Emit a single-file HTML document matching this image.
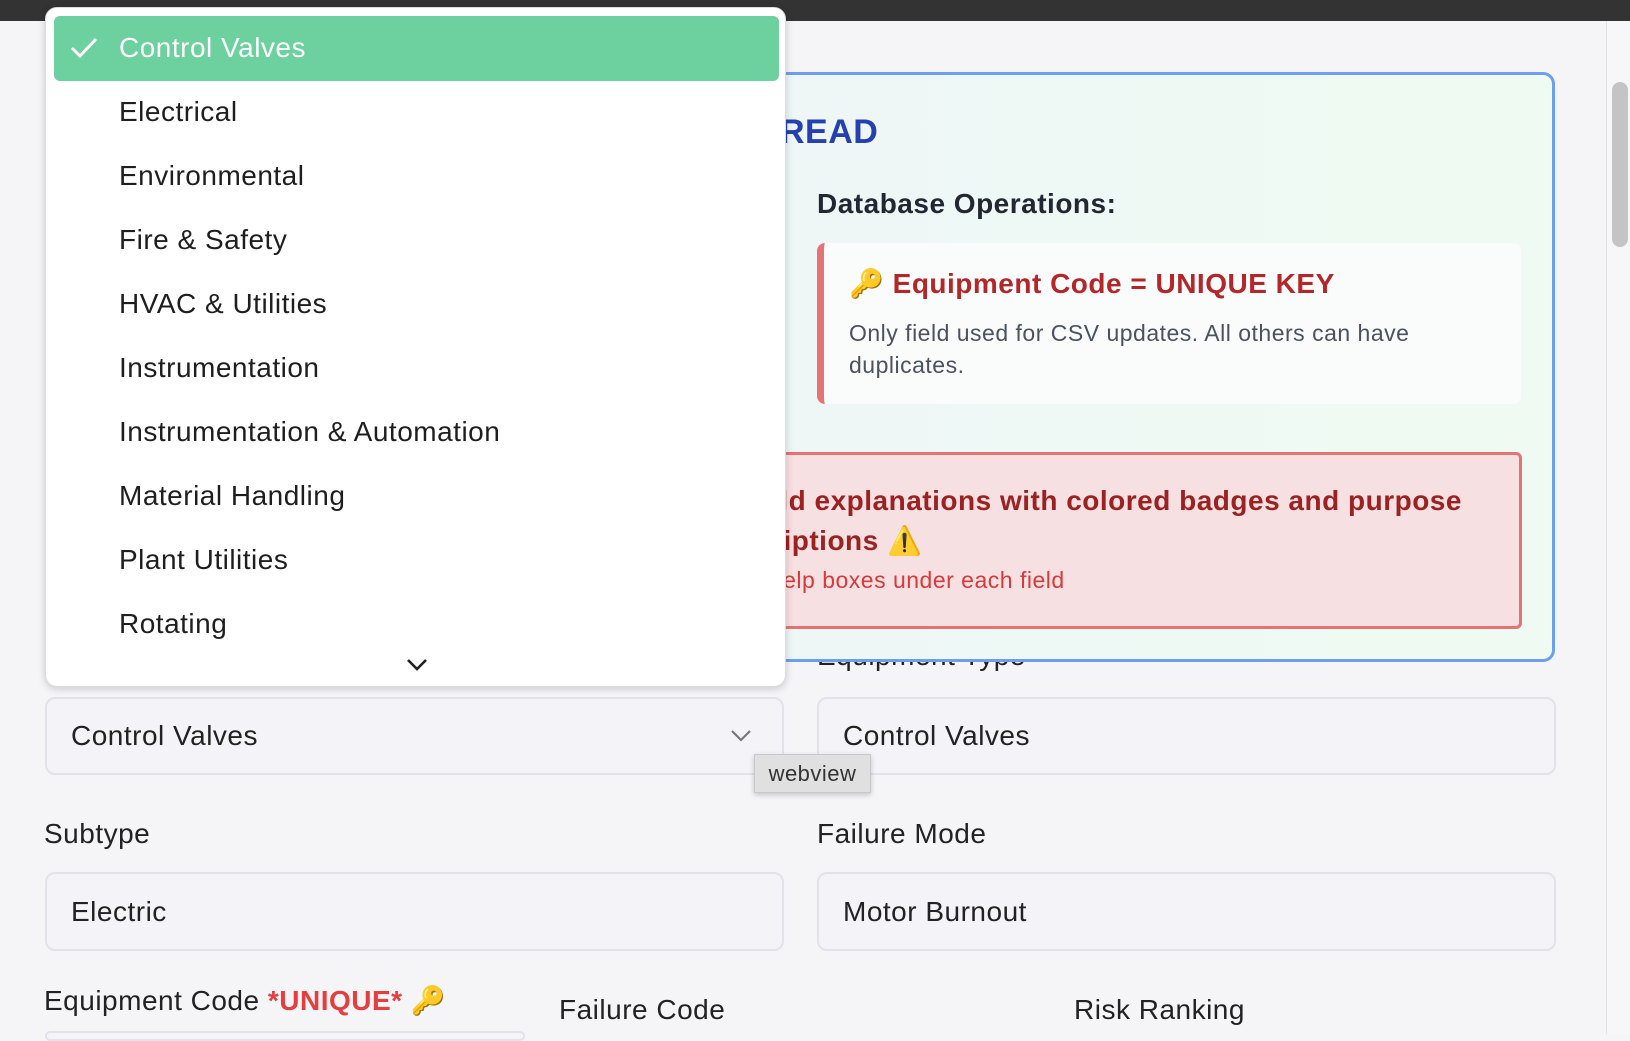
<!DOCTYPE html>
<html><head><meta charset="utf-8"><style>
*{box-sizing:border-box;margin:0;padding:0}
body{width:1630px;height:1034px;overflow:hidden;background:#f5f5f8;font-family:"Liberation Sans",sans-serif;position:relative;letter-spacing:.5px}
.top{position:absolute;left:0;top:0;width:1630px;height:21px;background:#333}
.page{position:absolute;left:0;top:21px;width:1607px;height:1013px;background:#f5f5f8;border-top-left-radius:14px;border-right:1px solid #e2e2e6}
.rside{position:absolute;left:1607px;top:21px;width:23px;height:1013px;background:#f7f7f9}
.sb{position:absolute;left:1612px;top:82px;width:16px;height:165px;background:#c4c4c6;border-radius:8px}
.abs{position:absolute}
.lbl{position:absolute;font-size:28px;color:#222;font-weight:500}
.field{position:absolute;background:#f4f4f8;border:2px solid #e2e2ea;border-radius:10px;font-size:28px;color:#222;padding-left:24px;display:flex;align-items:center}
.panel{position:absolute;left:700px;top:72px;width:855px;height:590px;border:3px solid #6c9ff0;border-radius:12px;background:linear-gradient(90deg,#eef6f7,#effbf2)}
.dd{position:absolute;left:45px;top:7px;width:741px;height:680px;background:#fff;border-radius:12px;box-shadow:0 2px 8px rgba(0,0,0,.18);border:1px solid #ddd;z-index:5}
.it{position:absolute;left:73px;font-size:28px;color:#1e1e1e}
</style></head><body>
<div class="top"></div>
<div class="page"></div><div class="rside"></div><div class="sb"></div>

<div class="lbl" style="left:817px;top:640px">Equipment Type</div>
<div class="panel">
 <div class="abs" style="left:77px;top:38px;font-size:34px;font-weight:bold;color:#2540b0">READ</div>
 <div class="abs" style="left:114px;top:113px;font-size:28px;font-weight:bold;color:#222833">Database Operations:</div>
 <div class="abs" style="left:114px;top:168px;width:704px;height:161px;background:#fafcfc;border-left:7px solid #e57373;border-radius:8px">
  <div class="abs" style="left:25px;top:24px;font-size:28px;font-weight:bold;color:#b3262a">🔑 Equipment Code = UNIQUE KEY</div>
  <div class="abs" style="left:25px;top:74px;font-size:23px;color:#4a5260;line-height:32px;width:640px">Only field used for CSV updates. All others can have duplicates.</div>
 </div>
 <div class="abs" style="left:40px;top:377px;width:779px;height:177px;background:#f7e0e1;border:3px solid #e57373;border-radius:6px">
  <div class="abs" style="left:10px;top:26px;font-size:28px;font-weight:bold;color:#9b2222;line-height:40px;white-space:nowrap">ield explanations with colored badges and purpose<br>criptions ⚠️</div>
  <div class="abs" style="left:20px;top:112px;font-size:23px;color:#d63a3a">Help boxes under each field</div>
 </div>
</div>

<div class="field" style="left:45px;top:697px;width:739px;height:78px">Control Valves
 <svg class="abs" style="left:683px;top:30px" width="22" height="14"><path d="M2 2l9 9 9-9" stroke="#777" stroke-width="2.2" fill="none"/></svg></div>
<div class="field" style="left:817px;top:697px;width:739px;height:78px">Control Valves</div>
<div class="abs" style="left:754px;top:754px;width:117px;height:39px;background:#e0e0e0;border:1px solid #c8c8c8;box-shadow:0 2px 5px rgba(0,0,0,.2);font-size:22px;color:#333;text-align:center;line-height:37px;z-index:6">webview</div>

<div class="lbl" style="left:44px;top:818px">Subtype</div>
<div class="lbl" style="left:817px;top:818px">Failure Mode</div>
<div class="field" style="left:45px;top:872px;width:739px;height:79px">Electric</div>
<div class="field" style="left:817px;top:872px;width:739px;height:79px">Motor Burnout</div>
<div class="lbl" style="left:44px;top:984px">Equipment Code <span style="color:#e53e3e;font-weight:bold">*UNIQUE*</span> 🔑</div>
<div class="lbl" style="left:559px;top:994px">Failure Code</div>
<div class="lbl" style="left:1074px;top:994px">Risk Ranking</div>
<div class="abs" style="left:45px;top:1031px;width:480px;height:10px;border:2px solid #e2e2ea;border-radius:10px"></div>

<div class="dd">
 <div class="abs" style="left:8px;top:8px;width:725px;height:65px;background:#6dd09f;border-radius:6px">
  <svg class="abs" style="left:16px;top:20px" width="28" height="24"><path d="M2 12l8 8L26 3" stroke="#fff" stroke-width="3" fill="none"/></svg>
  <div class="abs" style="left:65px;top:16px;font-size:28px;color:#fff">Control Valves</div>
 </div>
 <div class="it" style="top:88px">Electrical</div>
 <div class="it" style="top:152px">Environmental</div>
 <div class="it" style="top:216px">Fire &amp; Safety</div>
 <div class="it" style="top:280px">HVAC &amp; Utilities</div>
 <div class="it" style="top:344px">Instrumentation</div>
 <div class="it" style="top:408px">Instrumentation &amp; Automation</div>
 <div class="it" style="top:472px">Material Handling</div>
 <div class="it" style="top:536px">Plant Utilities</div>
 <div class="it" style="top:600px">Rotating</div>
 <svg class="abs" style="left:360px;top:650px" width="22" height="14"><path d="M2 2l9 9 9-9" stroke="#222" stroke-width="2.6" fill="none"/></svg>
</div>
</body></html>
